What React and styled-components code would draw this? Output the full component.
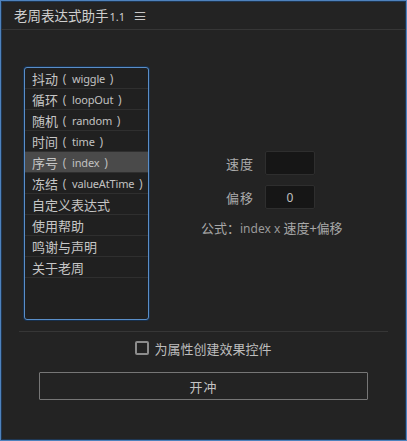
import React, { useState } from "react";
import styled, { createGlobalStyle } from "styled-components";

const Global = createGlobalStyle`
  html, body { margin: 0; padding: 0; background: #232323; }
  body { font-family: "Noto Sans", "Noto Sans CJK SC", sans-serif; }
  * { box-sizing: border-box; }
`;

const CJK = `"Noto Sans CJK SC", "Noto Sans", sans-serif`;

const Frame = styled.div`
  width: 407px;
  height: 441px;
  background: #232323;
  border: 1px solid #4e82bd;
  box-shadow: inset 0 0 0 1px #1e3652;
  display: flex;
  flex-direction: column;
  font-family: ${CJK};
  color: #c4c4c4;
`;

const TitleBar = styled.div`
  height: 29px;
  flex: none;
  display: flex;
  align-items: center;
  padding-left: 13px;
  border-bottom: 1px solid #363636;
  font-size: 13.5px;
  color: #cfcfcf;
`;

const Version = styled.span`
  font-family: "Noto Sans", sans-serif;
  font-size: 11px;
  margin-left: 1px;
  margin-top: 2px;
`;

const MenuGlyph = styled.span`
  margin-left: 8px;
  font-size: 14px;
  color: #c8c8c8;
`;

const Main = styled.div`
  display: flex;
  align-items: flex-start;
  padding: 37px 0 0 23px;
`;

const List = styled.div`
  width: 125px;
  height: 253px;
  border: 1px solid #5a8ec8;
  box-shadow: 0 0 0 1px #17304d;
  border-radius: 3px;
  background: #202020;
  display: flex;
  flex-direction: column;
  overflow: hidden;
`;

const Row = styled.div`
  height: 21px;
  flex: none;
  border-bottom: 1px solid #2f2f2f;
  padding-left: 7px;
  display: flex;
  align-items: center;
  font-size: 13px;
  white-space: nowrap;
  color: #c6c6c6;
  background: ${(p) => (p.$active ? "#4a4a4a" : "transparent")};
`;

const Paren = styled.span`
  display: inline-block;
  width: 13px;
  text-align: center;
  font-family: "Noto Sans", sans-serif;
  font-size: 12px;
  color: #bdbdbd;
`;

const En = styled.span`
  font-family: "Noto Sans", sans-serif;
  font-size: 11px;
  letter-spacing: -0.15px;
  margin-left: 1px;
  color: #c2c2c2;
`;

const Form = styled.div`
  margin: 84px 0 0 52px;
  display: flex;
  flex-direction: column;
`;

const Field = styled.div`
  display: flex;
  align-items: center;
  gap: 11px;
  padding-left: 25px;
  margin-bottom: 10px;
`;

const Label = styled.span`
  font-size: 13px;
  color: #ababab;
  letter-spacing: 1px;
`;

const Input = styled.div`
  width: 50px;
  height: 24px;
  background: #161616;
  border: 1px solid #2e2e2e;
  border-radius: 2px;
  display: flex;
  align-items: center;
  justify-content: center;
  font-family: "Noto Sans", sans-serif;
  font-size: 12px;
  color: #c0c0c0;
`;

const Formula = styled.div`
  margin-top: -1px;
  font-size: 13px;
  color: #a8a8a8;
  white-space: nowrap;
`;

const Latin = styled.span`
  font-family: "Noto Sans", sans-serif;
  font-size: 12px;
  color: #9a9a9a;
`;

const Separator = styled.div`
  margin: 11px 18px 0 18px;
  height: 1px;
  background: #363636;
`;

const CheckRow = styled.label`
  margin-top: 5px;
  display: flex;
  align-items: center;
  justify-content: center;
  gap: 5px;
  font-size: 13px;
  color: #bdbdbd;
  height: 22px;
`;

const Box = styled.span`
  width: 14px;
  height: 14px;
  border: 2px solid #8c8c8c;
  border-radius: 2px;
  display: inline-block;
`;

const Button = styled.button`
  margin: 13px auto 0;
  width: 329px;
  height: 28px;
  background: #232323;
  border: 1px solid #767676;
  border-radius: 1px;
  color: #c4c4c4;
  font-family: ${CJK};
  font-size: 13px;
  letter-spacing: 1px;
  display: block;
`;

const items = [
  { cn: "抖动", en: "wiggle" },
  { cn: "循环", en: "loopOut" },
  { cn: "随机", en: "random" },
  { cn: "时间", en: "time" },
  { cn: "序号", en: "index" },
  { cn: "冻结", en: "valueAtTime" },
  { cn: "自定义表达式" },
  { cn: "使用帮助" },
  { cn: "鸣谢与声明" },
  { cn: "关于老周" },
];

export default function App() {
  const [active, setActive] = useState(4);
  return (
    <>
      <Global />
      <Frame>
        <TitleBar>
          老周表达式助手<Version>1.1</Version>
          <MenuGlyph>≡</MenuGlyph>
        </TitleBar>
        <Main>
          <List>
            {items.map((t, i) => (
              <Row key={t.cn} $active={i === active} onClick={() => setActive(i)}>
                {t.cn}
                {t.en && (
                  <>
                    <Paren>(</Paren>
                    <En>{t.en}</En>
                    <Paren>)</Paren>
                  </>
                )}
              </Row>
            ))}
          </List>
          <Form>
            <Field>
              <Label>速度</Label>
              <Input />
            </Field>
            <Field>
              <Label>偏移</Label>
              <Input>0</Input>
            </Field>
            <Formula>
              公式：<Latin>index x </Latin>速度+偏移
            </Formula>
          </Form>
        </Main>
        <Separator />
        <CheckRow>
          <Box />
          为属性创建效果控件
        </CheckRow>
        <Button>开冲</Button>
      </Frame>
    </>
  );
}
